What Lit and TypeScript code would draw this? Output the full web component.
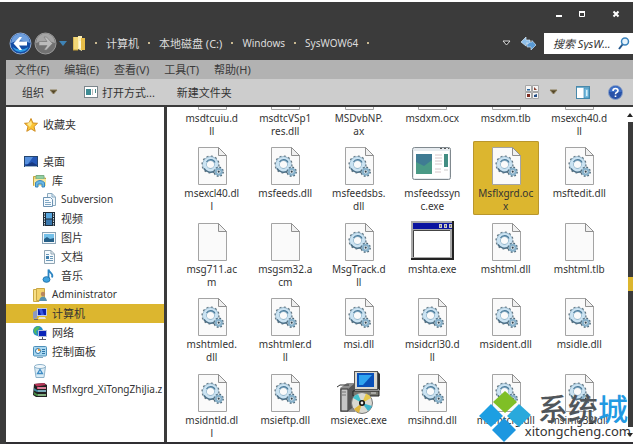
import { LitElement, html, svg, css } from "lit";
import { customElement } from "lit/decorators.js";
import { classMap } from "lit/directives/class-map.js";

type IconKind = "dll" | "blank" | "app" | "window" | "installer";

interface FileEntry {
  lines: string[];
  icon: IconKind;
  selected?: boolean;
}

interface TreeEntry {
  label: string;
  icon: string;
  level: number;
  latin?: boolean;
  selected?: boolean;
}

const file = (icon: IconKind, ...lines: string[]): FileEntry => ({ icon, lines });

const FILES: FileEntry[] = [
  file("dll", "msdtcuiu.d", "ll"),
  file("dll", "msdtcVSp1", "res.dll"),
  file("dll", "MSDvbNP.", "ax"),
  file("dll", "msdxm.ocx", "\u00a0"),
  file("dll", "msdxm.tlb", "\u00a0"),
  file("dll", "msexch40.d", "ll"),
  file("dll", "msexcl40.dl", "l"),
  file("dll", "msfeeds.dll"),
  file("dll", "msfeedsbs.", "dll"),
  file("app", "msfeedssyn", "c.exe"),
  { icon: "dll", lines: ["Msflxgrd.oc", "x"], selected: true },
  file("dll", "msftedit.dll"),
  file("blank", "msg711.ac", "m"),
  file("blank", "msgsm32.a", "cm"),
  file("dll", "MsgTrack.d", "ll"),
  file("window", "mshta.exe"),
  file("dll", "mshtml.dll"),
  file("blank", "mshtml.tlb"),
  file("dll", "mshtmled.", "dll"),
  file("dll", "mshtmler.d", "ll"),
  file("dll", "msi.dll"),
  file("dll", "msidcrl30.d", "ll"),
  file("dll", "msident.dll"),
  file("dll", "msidle.dll"),
  file("dll", "msidntld.dl", "l"),
  file("dll", "msieftp.dll"),
  file("installer", "msiexec.exe"),
  file("dll", "msihnd.dll"),
  file("dll", "msimtcfg.dll"),
  file("dll", "msimg32.dll"),
];

const TREE: TreeEntry[] = [
  { label: "桌面", icon: "desktop", level: 0 },
  { label: "库", icon: "library", level: 1 },
  { label: "Subversion", icon: "subversion", level: 2, latin: true },
  { label: "视频", icon: "video", level: 2 },
  { label: "图片", icon: "picture", level: 2 },
  { label: "文档", icon: "document", level: 2 },
  { label: "音乐", icon: "music", level: 2 },
  { label: "Administrator", icon: "user", level: 1, latin: true },
  { label: "计算机", icon: "computer", level: 1, selected: true },
  { label: "网络", icon: "network", level: 1 },
  { label: "控制面板", icon: "control", level: 1 },
  { label: "", icon: "recycle", level: 1 },
  { label: "Msflxgrd_XiTongZhiJia.z", icon: "archive", level: 1, latin: true },
];

const page = svg`
  <path d="M8.500 4.500H28.500L36.500 12.500V41.500H8.500Z" fill="#fafafa" stroke="#a4a4a4"/>
  <path d="M28.500 4.500V12.500H36.500Z" fill="#f0f0f0" stroke="#909090"/>`;

const FILE_ICONS = {
  blank: page,
  dll: svg`${page}
    <circle cx="20.500" cy="21.500" r="7.800" fill="none" stroke="#65757f" stroke-width="2.600" stroke-dasharray="1.800 2.300"/>
    <circle cx="20.500" cy="21.500" r="5.900" fill="none" stroke="#86a9bf" stroke-width="4.600"/>
    <circle cx="20.500" cy="21.500" r="5.900" fill="none" stroke="#cbe3f2" stroke-width="3.400"/>
    <path d="M16.500 19A4.800 4.800 0 0 1 25 19.500" fill="none" stroke="#4d7c9b" stroke-width="1.200"/>
    <path d="M14 25.500A7.600 7.600 0 0 0 24 28.300" fill="none" stroke="#4c6f86" stroke-width="1.500"/>
    <circle cx="28.700" cy="28.700" r="4.200" fill="none" stroke="#4f6a7a" stroke-width="2" stroke-dasharray="1.700 1.600"/>
    <circle cx="28.700" cy="28.700" r="2.900" fill="#fff" stroke="#88b1ca" stroke-width="2.200"/>
    <circle cx="28.700" cy="28.700" r="1.100" fill="#2d4351"/>`,
  app: svg`
    <rect x="2.500" y="4.500" width="38" height="32" rx="2" fill="#e6ebef" stroke="#80898f"/>
    <path d="M30 5.500h2M34 5.500h2M38 5.500h1" stroke="#555"/>
    <rect x="4" y="8" width="35" height="27" fill="#fff"/>
    <rect x="6" y="11" width="16" height="20" fill="#4a9a86"/>
    <path d="M6 11H22V17L14 23 6 19Z" fill="#3f7b93"/>
    <path d="M25 12h7M25 15h7M25 18h7M25 21h7M25 26h6M25 29h6" stroke="#d6c6ca"/>
    <rect x="34" y="11" width="4" height="13" fill="#438d83"/>
    <path d="M34 27h4" stroke="#ccc"/>`,
  window: svg`
    <path d="M1 2H44V41H1Z" fill="#222"/>
    <path d="M1 2H42V39H1Z" fill="#a9a9a9"/>
    <rect x="3" y="4" width="39" height="6" fill="#0b14a0"/>
    <path d="M29 5h3v4h-3zM34 5h3v4h-3zM39 5h3v4h-3z" fill="#c9c9c9"/>
    <path d="M30 7h1M35 7h1M40 7h1" stroke="#222"/>
    <rect x="3" y="12" width="37" height="26" fill="#fff"/>
    <path d="M3.500 38V11.500H40" fill="none" stroke="#444"/>`,
  installer: svg`
    <path d="M3 18L10 13H18V42H3Z" fill="#8f8f8f"/>
    <path d="M4 19h7v22h-7z" fill="#c6c6c6" stroke="#333"/>
    <path d="M11 19L18 13V36L11 41Z" fill="#565656"/>
    <path d="M5 22h4M5 25h4" stroke="#777"/>
    <path d="M0 17L3 15H12" stroke="#333" fill="none"/>
    <rect x="17.500" y="1.500" width="23" height="18" fill="#dad8cf" stroke="#555"/>
    <path d="M41 2L43 4V21L41 19Z" fill="#333"/>
    <rect x="20" y="3" width="17" height="14" fill="#0a50b8"/>
    <path d="M22 5H35L26 15H22Z" fill="#2fa4ef"/>
    <path d="M16 21H42V26H16Z" fill="#77776f" stroke="#222"/>
    <path d="M34 23h5" stroke="#ddd"/>
    <circle cx="25" cy="33" r="10.500" fill="#d9d9d2" stroke="#777"/>
    <path d="M25 33L16 28A10 10 0 0 1 21 24Z" fill="#43c2cd"/>
    <path d="M25 33L35 36A10 10 0 0 1 31 41Z" fill="#3db6cf"/>
    <path d="M25 33L29 23.500A10 10 0 0 1 34 28Z" fill="#e6c84a"/>
    <path d="M25 33L17 39A10 10 0 0 0 22 43Z" fill="#dfb63c"/>
    <circle cx="25" cy="33" r="3" fill="#111"/>
    <circle cx="25" cy="33" r="1.400" fill="#eee"/>`,
};

const TREE_ICONS: Record<string, unknown> = {
  star: svg`<path d="M7 .5L8.900 5 13.500 5.300 10 8.600 11.200 13.300 7 10.800 2.800 13.300 4 8.600.5 5.300 5.100 5Z" fill="#fbc536" stroke="#cf8d22"/><path d="M7 3L8 6 6 9 3 6Z" fill="#ffe98c"/>`,
  desktop: svg`<rect x=".5" y="1.500" width="13" height="10" fill="#2458b8" stroke="#25466f"/><path d="M1 2H9L4 9H1Z" fill="#5790dd"/><path d="M1 11L8 7 13 10V11Z" fill="#173a82"/><path d="M1 11.500h12" stroke="#9db5c8"/>`,
  library: svg`<path d="M.5 2.500H5L6 4H12.500V11.500H.5Z" fill="#f1d675" stroke="#c3a541"/><path d="M3 1.500H11V5H3Z" fill="#90cfa2" stroke="#7cae83"/><path d="M1 5H13V12H1Z" fill="#f7e79e"/><path d="M2.500 13V8.500Q7 4.500 11.500 8.500V13H9V10H5V13Z" fill="#69b7e4" stroke="#3b86bb"/>`,
  subversion: svg`<path d="M5.500.5H10L13.500 4V12.500H5.500Z" fill="#eef5fa" stroke="#8caabe"/><path d="M1.500 4.500H8.500L10.500 6.500V13.500H1.500Z" fill="#f6fbff" stroke="#6d93b3"/><path d="M3 7.500h4M3 9.500h6M3 11.500h6M10 .5V4H13" stroke="#82a8c4" fill="none"/>`,
  video: svg`<rect x="1" y="0" width="12" height="14" fill="#1d2b38"/><rect x="4" y="1" width="6" height="5.500" fill="#58a7e0"/><rect x="4" y="7.500" width="6" height="5.500" fill="#3a78ae"/><path d="M2.500 1V14M11.500 1V14" stroke="#c7d8e2" stroke-dasharray="1.500 1"/>`,
  picture: svg`<rect x=".5" y="1.500" width="13" height="11" fill="#f3f7fa" stroke="#8aa3b5"/><rect x="2" y="3" width="10" height="8" fill="#74c0e9"/><path d="M2 8L5 6 8 8 12 7V11H2Z" fill="#255f87"/>`,
  document: svg`<path d="M2.500.5H9L12.500 4V13.500H2.500Z" fill="#f4f9fc" stroke="#8fa4b2"/><path d="M9 .5V4H12" fill="none" stroke="#8fa4b2"/><path d="M4 4.500h3M4 10.500h7M8 6.500h3M8 8.500h3" stroke="#6b98b8"/><rect x="4" y="6" width="3" height="3" fill="#3e7fae"/>`,
  music: svg`<path d="M6.500 10V.5C7 4 12 4 10 8.500" fill="none" stroke="#2b84c2" stroke-width="1.800"/><ellipse cx="4.500" cy="10.500" rx="3.500" ry="2.800" fill="#3fa3e0" stroke="#2376ae"/>`,
  user: svg`<path d="M.5 1.500H5L6 13.500H.5Z" fill="#f7df86" stroke="#c9a945"/><path d="M3.500.5H11.500V12.500H3.500Z" fill="#f3d36b" stroke="#caa744"/><circle cx="10" cy="6" r="2.200" fill="#b98760"/><path d="M6 13Q7 8.500 10 8.500T14 13Z" fill="#5791b0"/>`,
  computer: svg`<path d="M0 5L4 3V11L0 12Z" fill="#8e99c0"/><rect x="4" y="1" width="10" height="8" fill="#bcc8e8"/><rect x="5" y="2" width="8" height="6" fill="#0a22b0"/><path d="M6 2H9L11 8H8Z" fill="#3958e0"/><path d="M6 10H12L13 12H5Z" fill="#e6e4dc"/><path d="M1 12.500h4" stroke="#667"/>`,
  network: svg`<circle cx="5" cy="5" r="5" fill="#238cc9"/><path d="M2 2Q5-1 7 1L5 4 3 5 4 9Q0 7 1 3Z" fill="#52b95f"/><rect x="5.500" y="4.500" width="8" height="6" fill="#0b25b8" stroke="#b6c2d9"/><path d="M9.500 11V13M6 13.500h7" stroke="#556"/>`,
  control: svg`<rect x=".5" y="1.500" width="13" height="9.500" rx="1" fill="#a9d7f0" stroke="#4d8fb9"/><circle cx="5" cy="6" r="2.500" fill="#f6fbff" stroke="#2d77ab"/><path d="M5 6V3.500A2.500 2.500 0 0 1 7.500 6Z" fill="#e49a38"/><path d="M9 4.500h3M9 6.500h3M9 8.500h3" stroke="#2f75a6"/><path d="M4 12.500h6" stroke="#7aa4bd"/>`,
  recycle: svg`<path d="M1.500 2.500H12.500L11 13.500H3Z" fill="#d9ebf5" stroke="#8db2ca"/><ellipse cx="7" cy="2.500" rx="5.500" ry="2" fill="#f0f7fb" stroke="#8db2ca"/><path d="M7 5.500L9.500 9.500H4.500Z" fill="none" stroke="#3d8bc4" stroke-width="1.300"/>`,
  archive: svg`<path d="M1 1L11 0 14 2V14H3L0 12Z" fill="#222"/><path d="M1 1L11 0 13 2 4 3.500Z" fill="#b73558"/><path d="M4 4H13V6H4Z" fill="#d64b72"/><path d="M1 5L4 7H13V9H4L1 7.500Z" fill="#3f8aa0"/><path d="M1 9L4 11H13V13H4L1 11.500Z" fill="#4a8d46"/><path d="M5 5h8M5 8h8M5 12h8" stroke="#e8e8e8" stroke-width=".7"/>`,
};

@customElement("app-root")
export class AppRoot extends LitElement {
  static styles = css`
    :host {
      display: flex;
      flex-direction: column;
      position: relative;
      min-height: 100vh;
      box-sizing: border-box;
      overflow: hidden;
      border-top: 2px solid #fff;
      background: #3b3b3b;
      color: #333;
      font: 11px/13px "Noto Sans", "Noto Sans CJK SC", sans-serif;
    }
    button, input {
      font: inherit;
      color: inherit;
      background: none;
      border: 0;
      padding: 0;
      margin: 0;
    }
    svg { display: block; flex: none; }
    ul { list-style: none; margin: 0; padding: 0; }
    .latin { font-size: 10px; }

    .caption { display: flex; justify-content: flex-end; height: 24px; padding-right: 11px; align-items: center; }
    .caption button:nth-child(2) { margin: 0 22px 0 11px; }

    .address { display: flex; align-items: center; height: 34px; padding-left: 9px; color: #ddd; }
    .history { display: flex; align-items: center; gap: 2px; margin-right: 6px; }
    .crumbs { display: flex; align-items: center; flex: 1; }
    .dot { width: 2px; height: 2px; background: #c9b890; margin: 0 9px; }
    .refresh { display: flex; align-items: center; gap: 10px; margin-right: 8px; }
    .search {
      display: flex;
      align-items: center;
      width: 89px;
      height: 21px;
      box-sizing: border-box;
      padding: 0 3px 0 9px;
      background: #fff;
      color: #333;
    }
    .search input { flex: 1; min-width: 0; font-style: italic; outline: 0; }
    .search input::placeholder { color: #333; opacity: 1; }

    .menu { display: flex; align-items: center; gap: 15px; height: 19px; margin-left: 6px; padding-left: 9px; background: #b2b2b2; color: #3a3a3a; }
    .tools { display: flex; align-items: center; height: 26px; margin-left: 6px; padding: 0 10px 0 16px; background: #cdcdcd; border-bottom: 2px solid #3b3b3b; }
    .tools button { display: flex; align-items: center; }
    .organize { gap: 5px; margin-right: 26px; }
    .open { gap: 4px; margin-right: 22px; }
    .right { display: flex; align-items: center; margin-left: auto; gap: 18px; }
    .views { gap: 10px; }

    .body { display: flex; flex: 1; margin-left: 6px; border-bottom: 2px solid #302f33; background: #fff; }
    .tree { width: 158px; flex: none; padding-top: 8px; border-right: 3px solid #3b3b3b; overflow: hidden; }
    .tree button { display: flex; align-items: center; gap: 5px; width: 100%; height: 19px; white-space: nowrap; text-align: left; }
    .tree .level0 { padding-left: 18px; }
    .tree .level1 { padding-left: 27px; }
    .tree .level2 { padding-left: 36px; }
    .folders { margin-top: 18px; }
    .tree .picked { background: #dcb62f; }

    .files {
      display: grid;
      flex: 1;
      grid-template-columns: repeat(6, 1fr);
      grid-template-rows: 33px repeat(4, minmax(74px, 1fr));
      row-gap: 1px;
      padding: 0 11px 0 8px;
      overflow: hidden;
      justify-items: center;
    }
    .files li { align-self: start; min-width: 0; }
    .files li:nth-child(-n + 6) { align-self: end; }
    .file {
      display: flex;
      flex-direction: column;
      align-items: center;
      width: 66px;
      height: 74px;
      padding-top: 2px;
      font-size: 10px;
      line-height: 13px;
      white-space: nowrap;
      border-radius: 2px;
    }
    .file.picked { background: #dcb62f; box-shadow: inset 0 0 0 1px #b9962c; }
    .line { display: block; }

    .scroll { display: flex; flex-direction: column; align-items: center; justify-content: space-between; width: 6px; flex: none; padding: 6px 0 5px; }
    .track { flex: 1; display: flex; flex-direction: column; justify-content: center; width: 5px; margin: 5px 0 6px; background: #3b3b3b; }
    .thumb { height: 14px; background: #dcb62f; margin-top: 19px; }

    .brand { position: absolute; right: 2px; bottom: 2px; display: flex; align-items: center; pointer-events: none; }
    .words { display: flex; flex-direction: column; align-items: flex-end; margin-left: -6px; }
    .name { padding-right: 3px; font: 500 30px/31px "Noto Sans CJK SC", sans-serif; color: #50565b; }
    .city { color: #2199e2; }
    .site { font-size: 13px; line-height: 17px; color: #333; }
  `;

  private caret(outline = false) {
    return html`<svg width="9" height="6" viewBox="0 0 9 6">
      <path d="M1 1H8L4.500 5Z" fill=${outline ? "#222" : "#54482c"} stroke=${outline ? "#ddd" : "#8a7c58"}/>
    </svg>`;
  }

  private icon(name: string) {
    return html`<svg width="14" height="14" viewBox="0 0 14 14">${TREE_ICONS[name]}</svg>`;
  }

  private renderHeader() {
    return html`
      <div class="caption">
        <button aria-label="最小化"><svg width="12" height="12"><path d="M3 8h6" stroke="#fff" stroke-width="2"/></svg></button>
        <button aria-label="最大化"><svg width="12" height="12"><path d="M3.500 4.500h5v4h-5z" fill="none" stroke="#fff"/><path d="M3 4h6" stroke="#fff" stroke-width="2"/></svg></button>
        <button aria-label="关闭"><svg width="12" height="12"><path d="M3.500 3.500l5 5M8.500 3.500l-5 5" stroke="#fff" stroke-width="2"/></svg></button>
      </div>
      <div class="address">
        <div class="history">
          <button aria-label="后退">
            <svg width="23" height="23" viewBox="0 0 23 23">
              <circle cx="11.500" cy="11.500" r="10.500" fill="#154da4" stroke="#8fa9cf"/>
              <path d="M2 11A9.500 9.500 0 0 1 21 11Q11 6 2 11Z" fill="#6f9fdd"/>
              <path d="M3.500 15A9 9 0 0 0 19.500 15Q11 20 3.500 15Z" fill="#2e9ee8"/>
              <path d="M10.500 5H13L10 9.500H18V13.500H10L13 18H10.500L4.500 11.500Z" fill="#fff"/>
            </svg>
          </button>
          <button aria-label="前进">
            <svg width="23" height="23" viewBox="0 0 23 23">
              <circle cx="11.500" cy="11.500" r="10.500" fill="#717171" stroke="#9b9b9b"/>
              <path d="M2 11A9.500 9.500 0 0 1 21 11Q11 7 2 11Z" fill="#a5a5a5"/>
              <path d="M12.500 5H10L13 9.500H5V13.500H13L10 18H12.500L18.500 11.500Z" fill="#bbb" stroke="#777" stroke-width=".6"/>
            </svg>
          </button>
          <button aria-label="历史记录"><svg width="8" height="5"><path d="M0 0H8L4 5Z" fill="#3f83b5"/></svg></button>
        </div>
        <svg width="13" height="15" viewBox="0 0 13 15">
          <path d="M0 1H5V14H0Z" fill="#f2d777"/><path d="M5 0H9V15L5 13Z" fill="#fbeeb2"/>
          <path d="M8 2H12V14H8Z" fill="#e7bd48"/><path d="M7 5V12" stroke="#fff"/><path d="M0 1V14H5" fill="none" stroke="#c29c35"/>
        </svg>
        <nav class="crumbs" aria-label="地址">
          <span class="dot"></span><button>计算机</button>
          <span class="dot"></span><button>本地磁盘 (C:)</button>
          <span class="dot"></span><button class="latin">Windows</button>
          <span class="dot"></span><button class="latin">SysWOW64</button>
          <span class="dot"></span>
        </nav>
        <div class="refresh">
          <button aria-label="展开">${this.caret(true)}</button>
          <button aria-label="刷新">
            <svg width="15" height="15" viewBox="0 0 15 15">
              <path d="M0 6L5 1V4H9V8H6V6.500L5 10Z" fill="#8fc0ea" stroke="#d7e8f7" stroke-width=".7"/>
              <path d="M15 9L10 14V11H6V8.500L9 6H11L11 4.500Z" fill="#5a9bd6" stroke="#c9def2" stroke-width=".7"/>
            </svg>
          </button>
        </div>
        <label class="search">
          <input type="text" placeholder="搜索 SysW..." aria-label="搜索 SysWOW64">
          <svg width="12" height="13" viewBox="0 0 12 13"><circle cx="7" cy="4.500" r="3.500" fill="#e6f3fc" stroke="#3a83bd" stroke-width="1.500"/><path d="M4.500 7.500L1 12" stroke="#24588d" stroke-width="2"/></svg>
        </label>
      </div>`;
  }

  private renderBars() {
    return html`
      <nav class="menu" aria-label="菜单">
        ${["文件(F)", "编辑(E)", "查看(V)", "工具(T)", "帮助(H)"].map((m) => html`<button>${m}</button>`)}
      </nav>
      <div class="tools">
        <button class="organize">组织 ${this.caret()}</button>
        <button class="open">
          <svg width="14" height="12" viewBox="0 0 14 12">
            <rect x=".5" y=".5" width="13" height="11" fill="#fff" stroke="#7c868c"/><rect x="2" y="3" width="5" height="6" fill="#3e8c94"/>
            <path d="M8.500 3V9" stroke="#bbb"/><path d="M11.500 3V7" stroke="#4b8b8b"/>
          </svg>
          打开方式...
        </button>
        <button>新建文件夹</button>
        <div class="right">
          <button class="views" aria-label="更改视图">
            <svg width="14" height="14" viewBox="0 0 14 14">
              <path d="M.5.5h6v6h-6zM7.500.5h6v6h-6zM.5 7.500h6v6h-6zM7.500 7.500h6v6h-6z" fill="#f5f5f5" stroke="#a6a6a6"/>
              <path d="M2 4h3v1.500h-3z" fill="#2a67a0"/><path d="M9 2l3 3h-3z" fill="#8a4334"/><path d="M2 9h3v3h-3z" fill="#7d2b20"/><path d="M9 10l3-1v3h-3z" fill="#254e84"/>
            </svg>
            ${this.caret()}
          </button>
          <button aria-label="预览窗格">
            <svg width="14" height="13" viewBox="0 0 14 13"><rect x=".5" y=".5" width="13" height="12" fill="#fff" stroke="#4889ab"/><path d="M1 1.500h12" stroke="#78b3d1"/><rect x="8" y="2" width="5" height="10" fill="#76bbdf" stroke="#3b86b0" stroke-width=".7"/><rect x="10" y="4" width="1.500" height="6" fill="#d4effa"/></svg>
          </button>
          <button aria-label="帮助">
            <svg width="15" height="15" viewBox="0 0 15 15"><circle cx="7.500" cy="7.500" r="7" fill="#2852a8" stroke="#8ba2c9"/><path d="M1.500 7A6 6 0 0 1 13.500 7Z" fill="#3d6fc6"/><path d="M5 6Q5 3.500 7.500 3.500T10 5.800Q10 7 8.500 7.600 7.500 8 7.500 9.300M7.500 10.500V12" fill="none" stroke="#fff" stroke-width="1.600"/></svg>
          </button>
        </div>
      </div>`;
  }

  render() {
    return html`
      ${this.renderHeader()} ${this.renderBars()}
      <div class="body">
        <nav class="tree" aria-label="导航">
          <button class="level0">${this.icon("star")}收藏夹</button>
          <ul class="folders">
            ${TREE.map((t) => html`<li>
              <button aria-label=${t.label || "回收站"}
                class=${classMap({ [`level${t.level}`]: true, latin: !!t.latin, picked: !!t.selected })}>${this.icon(t.icon)}${t.label}</button>
            </li>`)}
          </ul>
        </nav>
        <ul class="files">
          ${FILES.map((f) => html`<li>
            <button class=${classMap({ file: true, picked: !!f.selected })}>
              <svg width="44" height="44" viewBox="0 0 44 44">${FILE_ICONS[f.icon]}</svg>
              ${f.lines.map((l) => html`<span class="line">${l}</span>`)}
            </button>
          </li>`)}
        </ul>
        <div class="scroll">
          <svg width="6" height="4"><path d="M0 4H6L3 0Z" fill="#222"/></svg>
          <div class="track"><div class="thumb"></div></div>
          <svg width="6" height="4"><path d="M0 0H6L3 4Z" fill="#222"/></svg>
        </div>
      </div>
      <div class="brand">
        <svg width="52" height="52" viewBox="0 0 52 52">
          <path d="M26 1L38 12 26 23 14 12Z" fill="#7fbf26"/>
          <path d="M12 14L24 26 12 37 0 26Z" fill="#1d9fe2"/>
          <path d="M40 14L52 25 40 37 28 26Z" fill="#29a9dc"/>
          <path d="M25 28L37 40 25 52 13 40Z" fill="#1d97e0"/>
        </svg>
        <div class="words">
          <span class="name">系统<span class="city">城</span></span>
          <span class="site">xitongcheng.com</span>
        </div>
      </div>`;
  }
}
